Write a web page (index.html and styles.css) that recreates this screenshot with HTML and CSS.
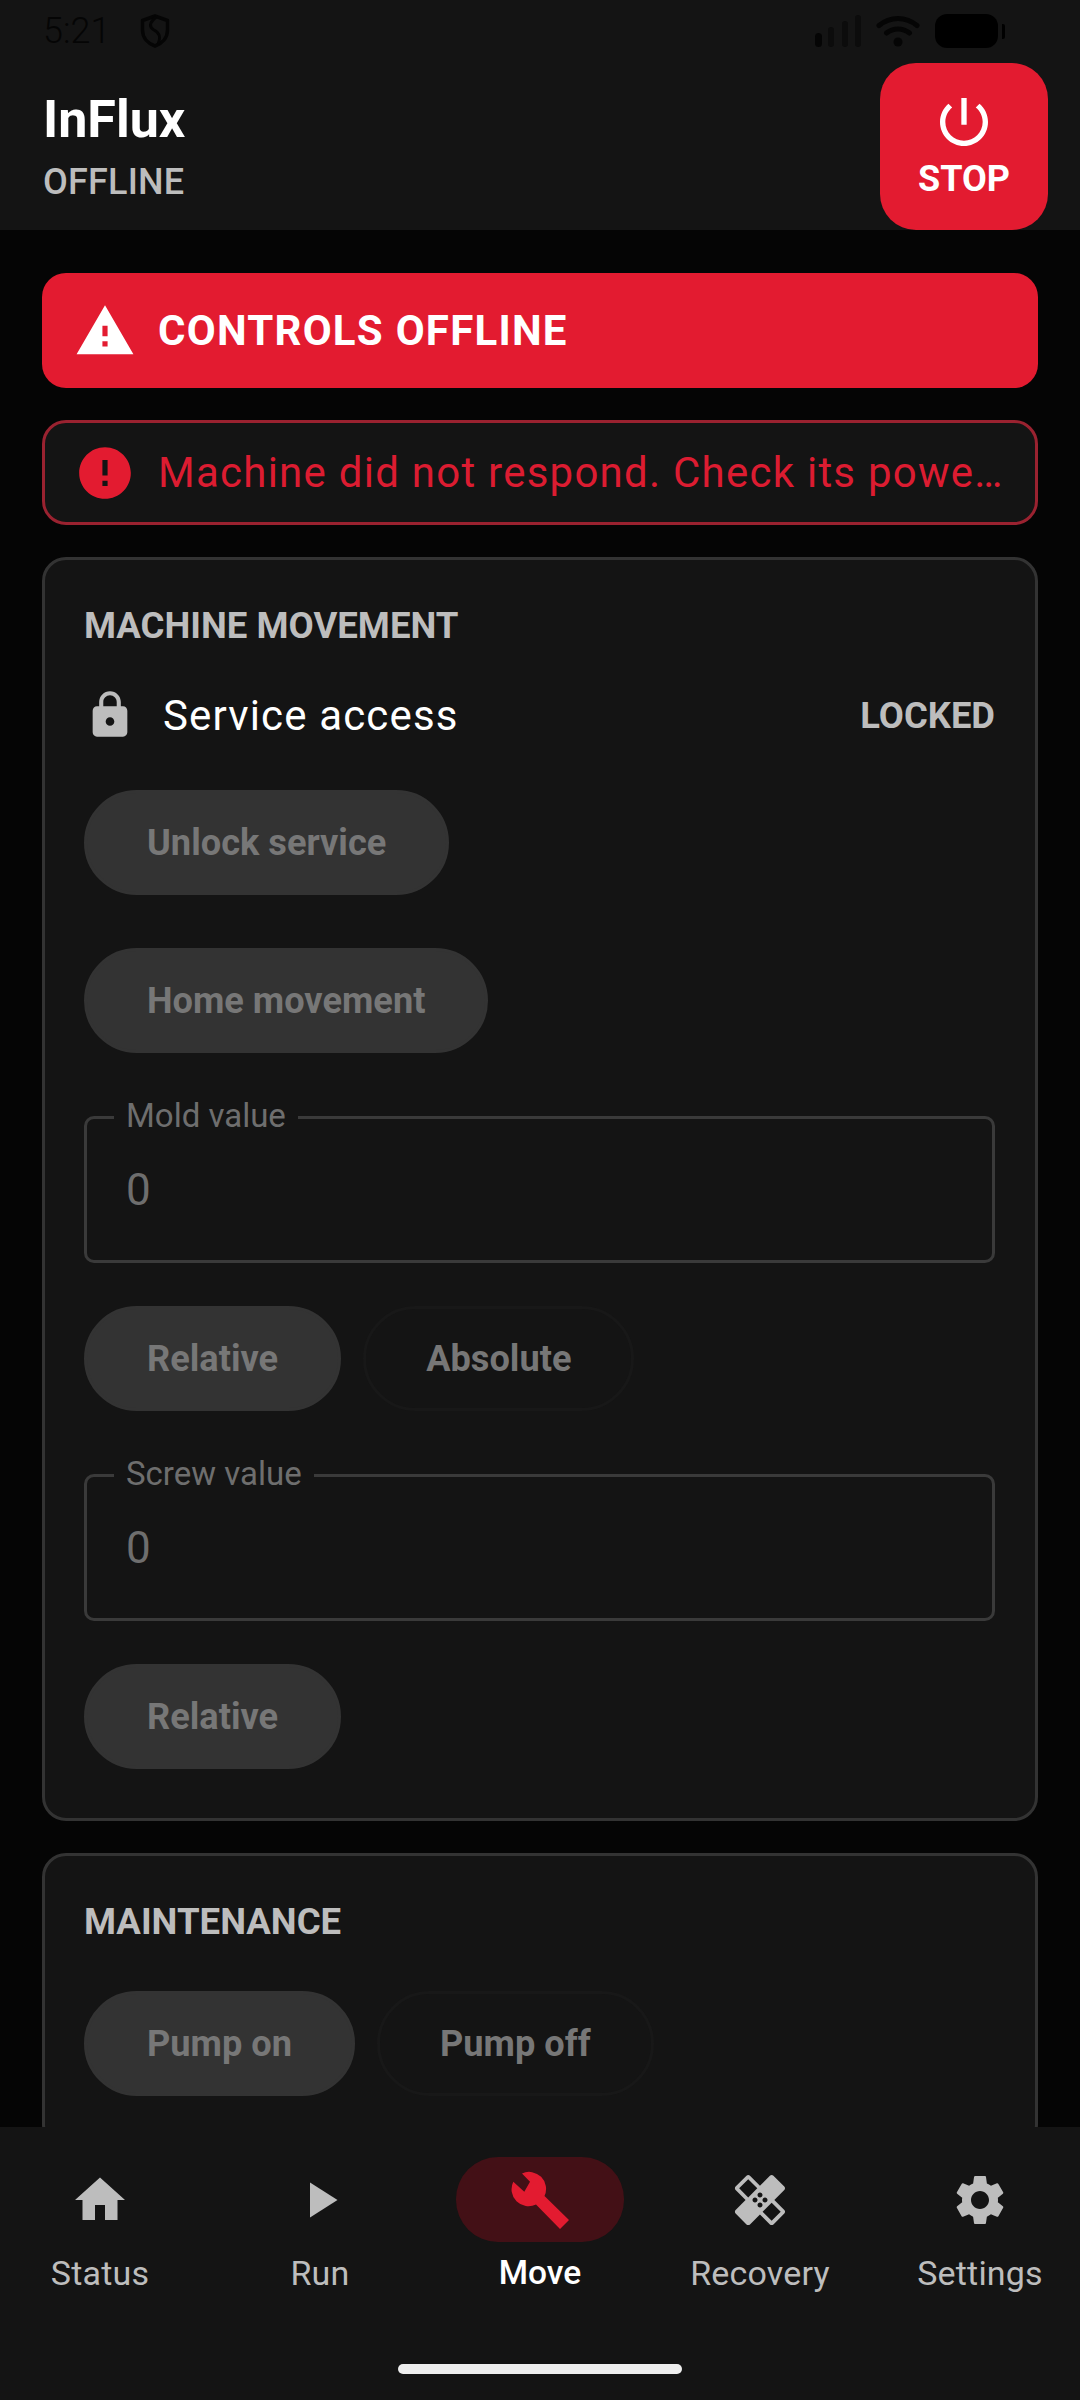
FILE: index.html
```html
<!DOCTYPE html>
<html lang="en">
<head>
    <meta charset="UTF-8">
    <meta name="viewport" content="width=device-width, initial-scale=1.0">
    <title>InFlux</title>
    <link rel="stylesheet" href="styles.css">
</head>
<body>
<div class="app">
    <header class="top">
        <div class="status-bar">
            <span class="clock">5:21</span>
            <svg class="shield" viewBox="0 0 30 34"><path d="M15 2 27.500 6.500V16C27.500 24 22 29.500 15 32 8 29.500 2.500 24 2.500 16V6.500Z" fill="none" stroke="#050505" stroke-width="3.500" stroke-linejoin="round"/><path d="M16 3C9 9 9 13 14 16 20 19 21 23 18 30" fill="none" stroke="#050505" stroke-width="3"/></svg>
            <div class="status-right">
                <svg class="signal" viewBox="0 0 46 34"><rect x="0" y="19" width="7" height="14" rx="3.500" fill="#050505"/><rect x="13" y="13" width="6" height="20" rx="3" fill="#0c0c0c"/><rect x="27" y="7" width="6" height="26" rx="3" fill="#0c0c0c"/><rect x="40" y="1" width="6" height="32" rx="3" fill="#0c0c0c"/></svg>
                <svg class="wifi" viewBox="0 0 44 34"><path d="M3 11.500C14 2 30 2 41 11.500M10.500 19C17 13.500 27 13.500 33.500 19" fill="none" stroke="#050505" stroke-width="5" stroke-linecap="round"/><circle cx="22" cy="28" r="4.500" fill="#050505"/></svg>
                <div class="battery"><div class="battery-body"></div><div class="battery-tip"></div></div>
            </div>
        </div>
        <div class="top-row">
            <div class="brand">
                <h1>InFlux</h1>
                <p>OFFLINE</p>
            </div>
            <button class="stop" type="button">
                <svg class="stop-icon" viewBox="0 0 24 24"><path d="M13 3h-2v10h2V3zm4.830 2.170l-1.420 1.420C17.990 7.860 19 9.810 19 12c0 3.870-3.130 7-7 7s-7-3.130-7-7c0-2.190 1.010-4.140 2.580-5.420L6.170 5.170C4.230 6.820 3 9.260 3 12c0 4.970 4.030 9 9 9s9-4.030 9-9c0-2.740-1.230-5.180-3.170-6.830z"/></svg>
                <span>STOP</span>
            </button>
        </div>
    </header>

    <main class="content">
        <div class="banner">
            <svg class="alert-icon" viewBox="0 0 24 24"><path d="M1 21h22L12 2 1 21zm12-3h-2v-2h2v2zm0-4h-2v-4h2v4z"/></svg>
            <span>CONTROLS OFFLINE</span>
        </div>

        <div class="error-box">
            <svg class="alert-icon" viewBox="0 0 24 24"><path d="M12 2C6.480 2 2 6.480 2 12s4.480 10 10 10 10-4.480 10-10S17.520 2 12 2zm1 15h-2v-2h2v2zm0-4h-2V7h2v6z"/></svg>
            <span class="error-text">Machine did not respond. Check its powe…</span>
        </div>

        <section class="card">
            <h2>MACHINE MOVEMENT</h2>
            <div class="access-row">
                <svg class="lock" viewBox="0 0 24 24"><path d="M18 8h-1V6c0-2.760-2.240-5-5-5S7 3.240 7 6v2H6c-1.100 0-2 .9-2 2v10c0 1.100.9 2 2 2h12c1.100 0 2-.9 2-2V10c0-1.100-.9-2-2-2zm-6 9c-1.100 0-2-.9-2-2s.9-2 2-2 2 .9 2 2-.9 2-2 2zm3.100-9H8.900V6c0-1.710 1.390-3.100 3.100-3.100 1.710 0 3.100 1.390 3.100 3.100v2z"/></svg>
                <span class="access-label">Service access</span>
                <span class="access-state">LOCKED</span>
            </div>
            <div class="btn-row first"><button class="btn" type="button">Unlock service</button></div>
            <div class="btn-row"><button class="btn" type="button">Home movement</button></div>
            <div class="field">
                <label>Mold value</label>
                <div class="field-value">0</div>
            </div>
            <div class="btn-row"><button class="btn" type="button">Relative</button><button class="btn outline" type="button">Absolute</button></div>
            <div class="field">
                <label>Screw value</label>
                <div class="field-value">0</div>
            </div>
            <div class="btn-row"><button class="btn" type="button">Relative</button></div>
        </section>

        <section class="card">
            <h2>MAINTENANCE</h2>
            <div class="btn-row first"><button class="btn" type="button">Pump on</button><button class="btn outline" type="button">Pump off</button></div>
        </section>
    </main>

    <nav class="bottom-nav">
        <div class="tabs">
            <a class="tab">
                <span class="tab-icon"><svg viewBox="0 0 24 24"><path d="M10 20v-6h4v6h5v-8h3L12 3 2 12h3v8z"/></svg></span>
                <span>Status</span>
            </a>
            <a class="tab">
                <span class="tab-icon"><svg viewBox="0 0 24 24"><path d="M8 5v14l11-7z"/></svg></span>
                <span>Run</span>
            </a>
            <a class="tab active">
                <span class="tab-icon"><svg viewBox="0 0 60 60"><path d="M12 3.400A17 17 0 0 1 34.500 26L59 50 50 59 26 34.500A17 17 0 0 1 3.300 11.700L14.300 21.700 20 11.700Z"/></svg></span>
                <span>Move</span>
            </a>
            <a class="tab">
                <span class="tab-icon"><svg viewBox="0 0 24 24"><path d="M17.730 12.020l3.980-3.980c.39-.39.39-1.020 0-1.410l-4.340-4.340c-.39-.39-1.020-.39-1.410 0l-3.980 3.980L8 2.290C7.800 2.100 7.550 2 7.290 2c-.25 0-.51.1-.7.29L2.250 6.630c-.39.39-.39 1.020 0 1.410l3.980 3.980L2.250 16c-.39.39-.39 1.020 0 1.410l4.340 4.340c.39.39 1.020.39 1.410 0l3.980-3.980 3.980 3.980c.2.2.45.29.71.29.26 0 .51-.1.71-.29l4.340-4.340c.39-.39.39-1.020 0-1.410l-3.980-3.980zM12 9c.55 0 1 .45 1 1s-.45 1-1 1-1-.45-1-1 .45-1 1-1zm-4.710 1.960L3.660 7.340l3.630-3.630 3.620 3.620-3.620 3.630zM10 13c-.55 0-1-.45-1-1s.45-1 1-1 1 .45 1 1-.45 1-1 1zm2 2c-.55 0-1-.45-1-1s.45-1 1-1 1 .45 1 1-.45 1-1 1zm2-4c.55 0 1 .45 1 1s-.45 1-1 1-1-.45-1-1 .45-1 1-1zm2.660 9.340l-3.630-3.620 3.630-3.630 3.620 3.620-3.620 3.630z"/></svg></span>
                <span>Recovery</span>
            </a>
            <a class="tab">
                <span class="tab-icon"><svg viewBox="0 0 24 24"><path d="M19.140 12.940c.04-.3.06-.61.06-.94 0-.32-.02-.64-.07-.94l2.030-1.580c.18-.14.23-.41.12-.61l-1.920-3.320c-.12-.22-.37-.29-.59-.22l-2.390.96c-.5-.38-1.030-.7-1.620-.94l-.36-2.540c-.04-.24-.24-.41-.48-.41h-3.840c-.24 0-.43.17-.47.41l-.36 2.540c-.59.24-1.130.57-1.620.94l-2.390-.96c-.22-.08-.47 0-.59.22L2.740 8.870c-.12.21-.08.47.12.61l2.030 1.580c-.05.3-.09.63-.09.94s.02.64.07.94l-2.030 1.580c-.18.14-.23.41-.12.61l1.920 3.320c.12.22.37.29.59.22l2.390-.96c.5.38 1.030.7 1.620.94l.36 2.540c.05.24.24.41.48.41h3.840c.24 0 .44-.17.47-.41l.36-2.540c.59-.24 1.130-.56 1.620-.94l2.390.96c.22.08.47 0 .59-.22l1.920-3.320c.12-.22.07-.47-.12-.61l-2.010-1.580zM12 15.600c-1.980 0-3.600-1.620-3.600-3.600s1.620-3.600 3.600-3.600 3.600 1.620 3.600 3.600-1.620 3.600-3.600 3.600z"/></svg></span>
                <span>Settings</span>
            </a>
        </div>
        <div class="home-bar"></div>
    </nav>
</div>
</body>
</html>
```

FILE: styles.css
```css
* {
    box-sizing: border-box;
}
body {
    margin: 0;
    background-color: #050505;
    font-family: Roboto, "Liberation Sans", sans-serif;
}
.app {
    width: 1080px;
    height: 2400px;
    display: flex;
    flex-direction: column;
    overflow: hidden;
}

/* top */
.top {
    height: 230px;
    background-color: #141414;
    flex-shrink: 0;
}
.status-bar {
    height: 63px;
    padding: 14px 75px 0 43px;
    display: flex;
    align-items: flex-start;
}
.clock {
    font-size: 36px;
    line-height: 34px;
    font-weight: 300;
    color: #050505;
}
.shield {
    width: 30px;
    height: 34px;
    margin-left: 30px;
}
.status-right {
    margin-left: auto;
    display: flex;
    gap: 15px;
}
.signal {
    width: 46px;
    height: 34px;
}
.wifi {
    width: 44px;
    height: 34px;
}
.battery {
    display: flex;
    align-items: center;
    gap: 4px;
}
.battery-body {
    width: 63px;
    height: 34px;
    border-radius: 12px;
    background-color: #000;
}
.battery-tip {
    width: 3px;
    height: 15px;
    border-radius: 0 2px 2px 0;
    background-color: #000;
}
.top-row {
    height: 167px;
    padding: 0 32px 0 43px;
    display: flex;
    justify-content: space-between;
}
.brand {
    padding-top: 27px;
}
.brand h1 {
    margin: 0;
    font-size: 52px;
    line-height: 60px;
    font-weight: 700;
    color: #fff;
}
.brand p {
    margin: 0;
    padding-top: 10px;
    font-size: 36px;
    line-height: 44px;
    font-weight: 500;
    letter-spacing: 0.2px;
    color: #bdbdbd;
}
.stop {
    width: 168px;
    height: 167px;
    border: none;
    border-radius: 36px;
    padding: 0 0 4px;
    background-color: #e31b30;
    color: #fff;
    font-family: inherit;
    font-size: 36px;
    font-weight: 700;
    display: flex;
    flex-direction: column;
    align-items: center;
    justify-content: center;
}
.stop-icon {
    width: 64px;
    height: 64px;
    fill: #fff;
    margin-bottom: 4px;
}

/* content */
.content {
    flex: 1;
    min-height: 0;
    overflow: hidden;
    padding: 43px 42px 0;
}
.banner {
    height: 115px;
    border-radius: 24px;
    background-color: #e31b30;
    color: #fff;
    padding: 0 0 0 32px;
    display: flex;
    align-items: center;
    gap: 22px;
    font-size: 42px;
    font-weight: 700;
    letter-spacing: 1.250px;
}
.alert-icon {
    width: 62px;
    height: 62px;
    flex-shrink: 0;
}
.banner .alert-icon {
    fill: #fff;
}
.error-box {
    height: 105px;
    margin-top: 32px;
    border: 3px solid #9a2230;
    border-radius: 24px;
    background-color: #141414;
    padding: 0 0 0 29px;
    display: flex;
    align-items: center;
    gap: 22px;
    color: #dc1c31;
}
.error-box .alert-icon {
    fill: #e31b30;
}
.error-text {
    font-size: 42px;
    letter-spacing: 1.250px;
    white-space: nowrap;
}
.card {
    margin-top: 32px;
    border: 3px solid #333;
    border-radius: 24px;
    background-color: #141414;
    padding: 44px 40px 49px 39px;
}
.card + .card {
    margin-top: 32px;
}
.card h2 {
    margin: 0;
    font-size: 36.600px;
    line-height: 44px;
    font-weight: 700;
    color: #bdbdbd;
}
.access-row {
    margin-top: 41px;
    height: 52px;
    display: flex;
    align-items: center;
}
.lock {
    width: 52px;
    height: 52px;
    fill: #bdbdbd;
    margin-right: 27px;
}
.access-label {
    font-size: 42px;
    letter-spacing: 1.150px;
    color: #fff;
}
.access-state {
    margin-left: auto;
    font-size: 36.400px;
    font-weight: 700;
    color: #bdbdbd;
}
.btn-row {
    margin-top: 53px;
    display: flex;
    gap: 22px;
}
.btn-row.first {
    margin-top: 49px;
}
.card h2 + .btn-row.first {
    margin-top: 47px;
}
.field + .btn-row {
    margin-top: 43px;
}
.btn {
    height: 105px;
    border: 3px solid #333;
    border-radius: 53px;
    padding: 0 60px;
    background-color: #333;
    color: #777;
    font-family: inherit;
    font-size: 36.200px;
    font-weight: 700;
}
.btn.outline {
    background-color: transparent;
    border-color: #181818;
}
.field {
    position: relative;
    height: 147px;
    margin-top: 64px;
    border: 3px solid #3a3a3a;
    border-radius: 10px;
    padding: 0 39px;
    display: flex;
    align-items: center;
}
.btn-row + .field {
    margin-top: 63px;
}
.field label {
    position: absolute;
    top: -21px;
    left: 27px;
    padding: 0 12px;
    background-color: #141414;
    font-size: 33px;
    line-height: 36px;
    color: #6e6e6e;
}
.field-value {
    font-size: 44px;
    color: #6e6e6e;
}

/* bottom nav */
.bottom-nav {
    height: 273px;
    flex-shrink: 0;
    background-color: #141414;
    position: relative;
    padding: 30px 12px 0;
}
.tabs {
    display: flex;
    gap: 44px;
}
.tab {
    flex: 1;
    min-width: 0;
    display: flex;
    flex-direction: column;
    align-items: center;
    font-size: 34px;
    line-height: 40px;
    letter-spacing: 0.2px;
    color: #bdbdbd;
    white-space: nowrap;
}
.tab-icon {
    width: 168px;
    height: 85px;
    border-radius: 42px;
    margin-bottom: 11px;
    display: flex;
    align-items: center;
    justify-content: center;
}
.tab-icon svg {
    width: 60px;
    height: 60px;
    fill: #bdbdbd;
}
.tab.active {
    color: #fff;
    font-size: 33.500px;
    font-weight: 500;
    letter-spacing: 0;
}
.tab.active .tab-icon {
    background-color: #431016;
}
.tab.active .tab-icon svg {
    fill: #e31b30;
}
.home-bar {
    position: absolute;
    left: 398px;
    bottom: 26px;
    width: 284px;
    height: 10px;
    border-radius: 5px;
    background-color: #eee;
}
```
